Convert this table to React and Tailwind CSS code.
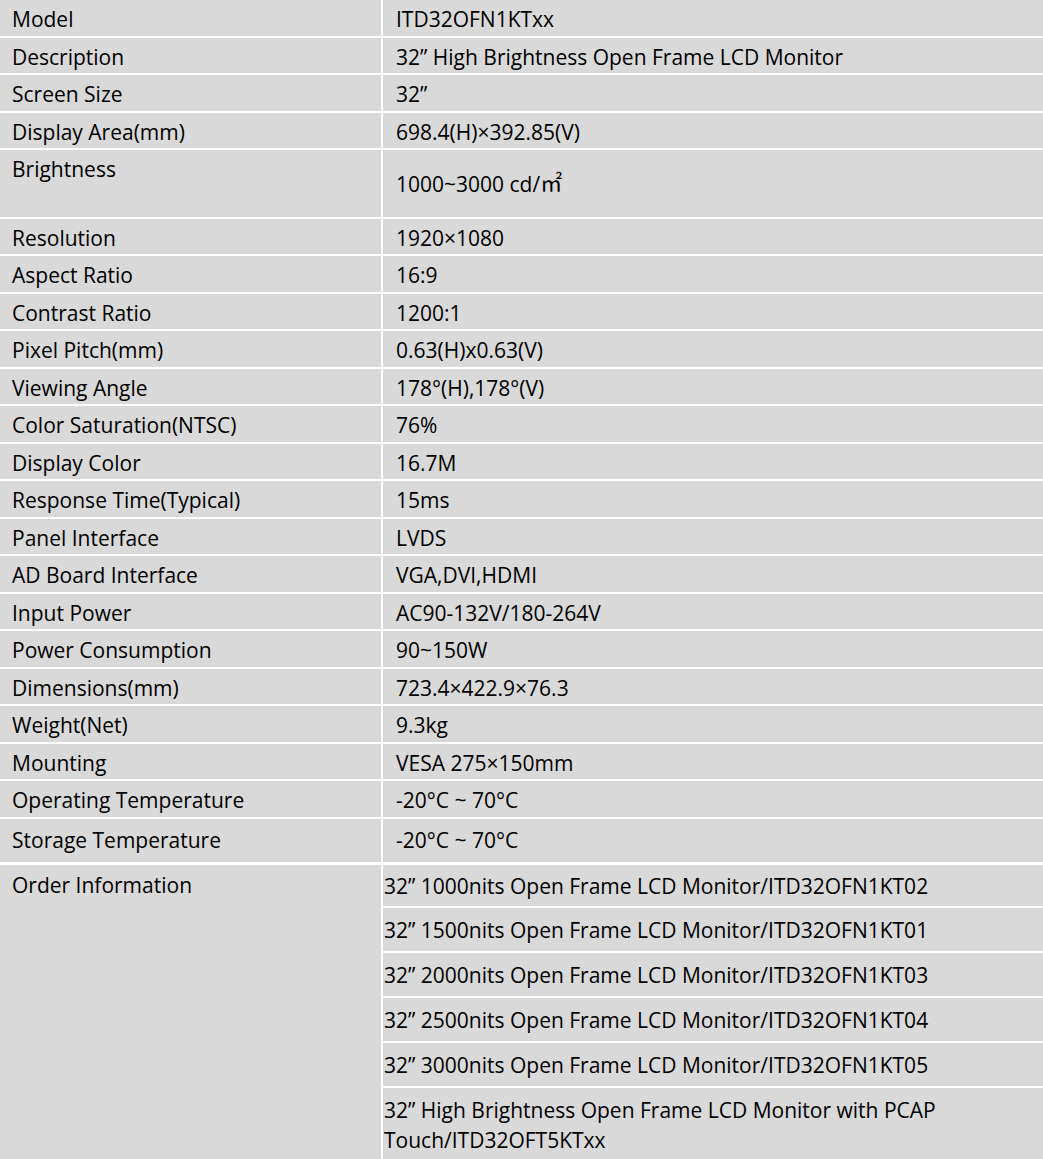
const specs = [
  ['Model', 'ITD32OFN1KTxx'],
  ['Description', '32\u201D High Brightness Open Frame LCD Monitor'],
  ['Screen Size', '32\u201D'],
  ['Display Area(mm)', '698.4(H)\u00D7392.85(V)'],
  ['Brightness', 'BRIGHT'],
  ['Resolution', '1920\u00D71080'],
  ['Aspect Ratio', '16:9'],
  ['Contrast Ratio', '1200:1'],
  ['Pixel Pitch(mm)', '0.63(H)x0.63(V)'],
  ['Viewing Angle', '178\u00B0(H),178\u00B0(V)'],
  ['Color Saturation(NTSC)', '76%'],
  ['Display Color', '16.7M'],
  ['Response Time(Typical)', '15ms'],
  ['Panel Interface', 'LVDS'],
  ['AD Board Interface', 'VGA,DVI,HDMI'],
  ['Input Power', 'AC90-132V/180-264V'],
  ['Power Consumption', '90~150W'],
  ['Dimensions(mm)', '723.4\u00D7422.9\u00D776.3'],
  ['Weight(Net)', '9.3kg'],
  ['Mounting', 'VESA 275\u00D7150mm'],
  ['Operating Temperature', '-20\u00B0C ~ 70\u00B0C'],
];

const orders = [
  '32\u201D 1000nits Open Frame LCD Monitor/ITD32OFN1KT02',
  '32\u201D 1500nits Open Frame LCD Monitor/ITD32OFN1KT01',
  '32\u201D 2000nits Open Frame LCD Monitor/ITD32OFN1KT03',
  '32\u201D 2500nits Open Frame LCD Monitor/ITD32OFN1KT04',
  '32\u201D 3000nits Open Frame LCD Monitor/ITD32OFN1KT05',
];

const Cell = ({ children, className = '' }) => (
  <div className={`bg-[#d9d9d9] flex items-center ${className}`}>{children}</div>
);

export default function App() {
  return (
    <div
      className="w-[1043px] h-[1159px] bg-white text-black text-[21px] leading-[30px] overflow-hidden flex flex-col gap-[2px]"
      style={{ fontFamily: '"Open Sans", "Noto Sans CJK SC", sans-serif' }}
    >
      {specs.map(([label, value]) => {
        if (value === 'BRIGHT') {
          return (
            <div key={label} className="flex gap-[2px] h-[66.7px] shrink-0">
              <div className="w-[381px] bg-[#d9d9d9] pl-3 pt-[4px]">{label}</div>
              <Cell className="flex-1 pl-[13px] pt-[2px]">
                1000~3000 cd/
                <span className="text-[22px] relative -top-[3px]" style={{ fontFamily: '"Noto Sans CJK SC", serif' }}>
                  ㎡
                </span>
              </Cell>
            </div>
          );
        }
        return (
          <div key={label} className="flex gap-[2px] h-[35.5px] shrink-0">
            <Cell className="w-[381px] pl-3 pt-[3px]">{label}</Cell>
            <Cell className="flex-1 pl-[13px] pt-[3px]">{value}</Cell>
          </div>
        );
      })}

      <div className="flex gap-[2px] h-[43px] shrink-0">
        <Cell className="w-[381px] pl-3">Storage Temperature</Cell>
        <Cell className="flex-1 pl-[13px]">-20°C ~ 70°C</Cell>
      </div>

      <div className="flex gap-[2px] flex-1 mt-[1px]">
        <div className="w-[381px] bg-[#d9d9d9] pl-3 pt-[5px]">Order Information</div>
        <div className="flex-1 flex flex-col gap-[2px]">
          {orders.map((o, i) => (
            <Cell key={o} className={`pl-[1px] pt-[1px] ${i === 0 ? 'h-[41px]' : 'h-[43px]'}`}>
              {o}
            </Cell>
          ))}
          <div className="flex-1 bg-[#d9d9d9] pl-[1px] pt-[7px]">
            32” High Brightness Open Frame LCD Monitor with PCAP
            <br />
            Touch/ITD32OFT5KTxx
          </div>
        </div>
      </div>
    </div>
  );
}
